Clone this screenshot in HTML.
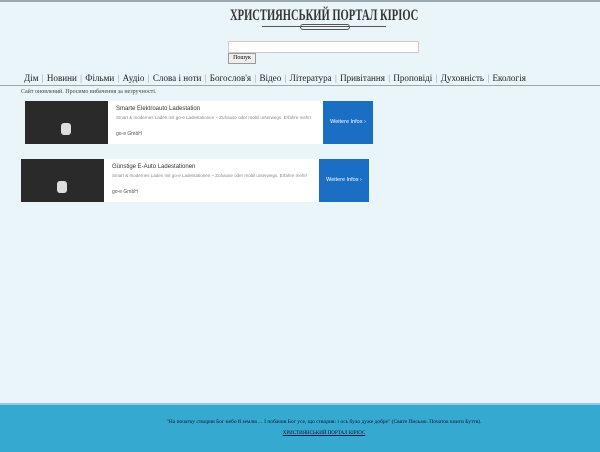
<!DOCTYPE html>
<html><head><meta charset="utf-8"><style>
body{margin:0;width:600px;height:450px;background:#e9f5f9;font-family:"Liberation Serif",serif;position:relative;overflow:hidden}
.top{position:absolute;left:0;top:0;width:600px;height:2px;background:#9aa9b0}
.title{position:absolute;left:230px;top:7px;width:188px;white-space:nowrap;font:bold 16px "Liberation Serif",serif;color:#333;transform-origin:0 0;transform:scaleX(0.66)}
.orn{position:absolute;left:262px;top:26px;width:124px;height:1px;background:#555}
.orn2{position:absolute;left:300px;top:24px;width:48px;height:4px;border:1px solid #555;border-radius:4px}
.inp{position:absolute;left:228px;top:41px;width:189px;height:10px;background:#fff;border:1px solid #ccc}
.btn{position:absolute;left:228px;top:53px;width:26px;height:9px;background:#eee;border:1px solid #999;font-size:6px;text-align:center;line-height:9px}
.nav{position:absolute;left:24px;top:73px;font-size:9.1px;color:#222;white-space:nowrap}
.nav i{color:#999;font-style:normal;margin:0 1px}
.hr{position:absolute;left:0;top:85px;width:600px;height:1px;background:#9aa9b0}
.note{position:absolute;left:21px;top:89px;font-size:6px;color:#444}
.ad{position:absolute;width:348px;height:43px;background:#fff}
.ad .img{position:absolute;left:0;top:0;width:83px;height:43px;background:#2a2a2a}
.ad .img b{position:absolute;left:36px;top:22px;width:10px;height:12px;background:#ddd;border-radius:3px}
.ad .t{position:absolute;left:91px;top:5px;font:6px "Liberation Sans",sans-serif;color:#333}
.ad .d{position:absolute;left:91px;top:14px;font:4.5px "Liberation Sans",sans-serif;color:#888;width:200px}
.ad .g{position:absolute;left:91px;top:30px;font:5px "Liberation Sans",sans-serif;color:#555}
.ad .bl{position:absolute;right:0;top:0;width:50px;height:43px;background:#1a6fc4;color:#fff;font:5.5px "Liberation Sans",sans-serif;line-height:43px;text-align:center}
.foot{position:absolute;left:0;top:403px;width:600px;height:47px;background:#35a9cf;border-top:2px solid #8ccde3}
.q{position:absolute;top:14px;left:0;width:648px;text-align:center;font-size:5.5px;color:#113}
.l{position:absolute;top:26px;left:0;width:648px;text-align:center;font-size:5px;color:#113;text-decoration:underline}
</style></head><body>
<div class="top"></div>
<div class="title">ХРИСТИЯНСЬКИЙ ПОРТАЛ КІРІОС</div>
<div class="orn"></div><div class="orn2"></div>
<div class="inp"></div>
<div class="btn">Пошук</div>
<div class="nav">Дім <i>|</i> Новини <i>|</i> Фільми <i>|</i> Аудіо <i>|</i> Слова і ноти <i>|</i> Богослов'я <i>|</i> Відео <i>|</i> Література <i>|</i> Привітання <i>|</i> Проповіді <i>|</i> Духовність <i>|</i> Екологія</div>
<div class="hr"></div>
<div class="note">Сайт оновлений. Просимо вибачення за незручності.</div>
<div class="ad" style="left:25px;top:101px"><div class="img"><b></b></div><div class="t">Smarte Elektroauto Ladestation</div><div class="d">Smart &amp; modernes Laden mit go-e Ladestationen – Zuhause oder mobil unterwegs. Erfahre mehr!</div><div class="g">go-e GmbH</div><div class="bl">Weitere Infos ›</div></div>
<div class="ad" style="left:21px;top:159px"><div class="img"><b></b></div><div class="t">Günstige E-Auto Ladestationen</div><div class="d">Smart &amp; modernes Laden mit go-e Ladestationen – Zuhause oder mobil unterwegs. Erfahre mehr!</div><div class="g">go-e GmbH</div><div class="bl">Weitere Infos ›</div></div>
<div class="foot"><div class="q">"На початку створив Бог небо й землю… І побачив Бог усе, що створив: і ось було дуже добре" (Святе Письмо. Почат­ок книги Буття).</div><div class="l">ХРИСТИЯНСЬКИЙ ПОРТАЛ КІРІОС</div></div>
</body></html>
